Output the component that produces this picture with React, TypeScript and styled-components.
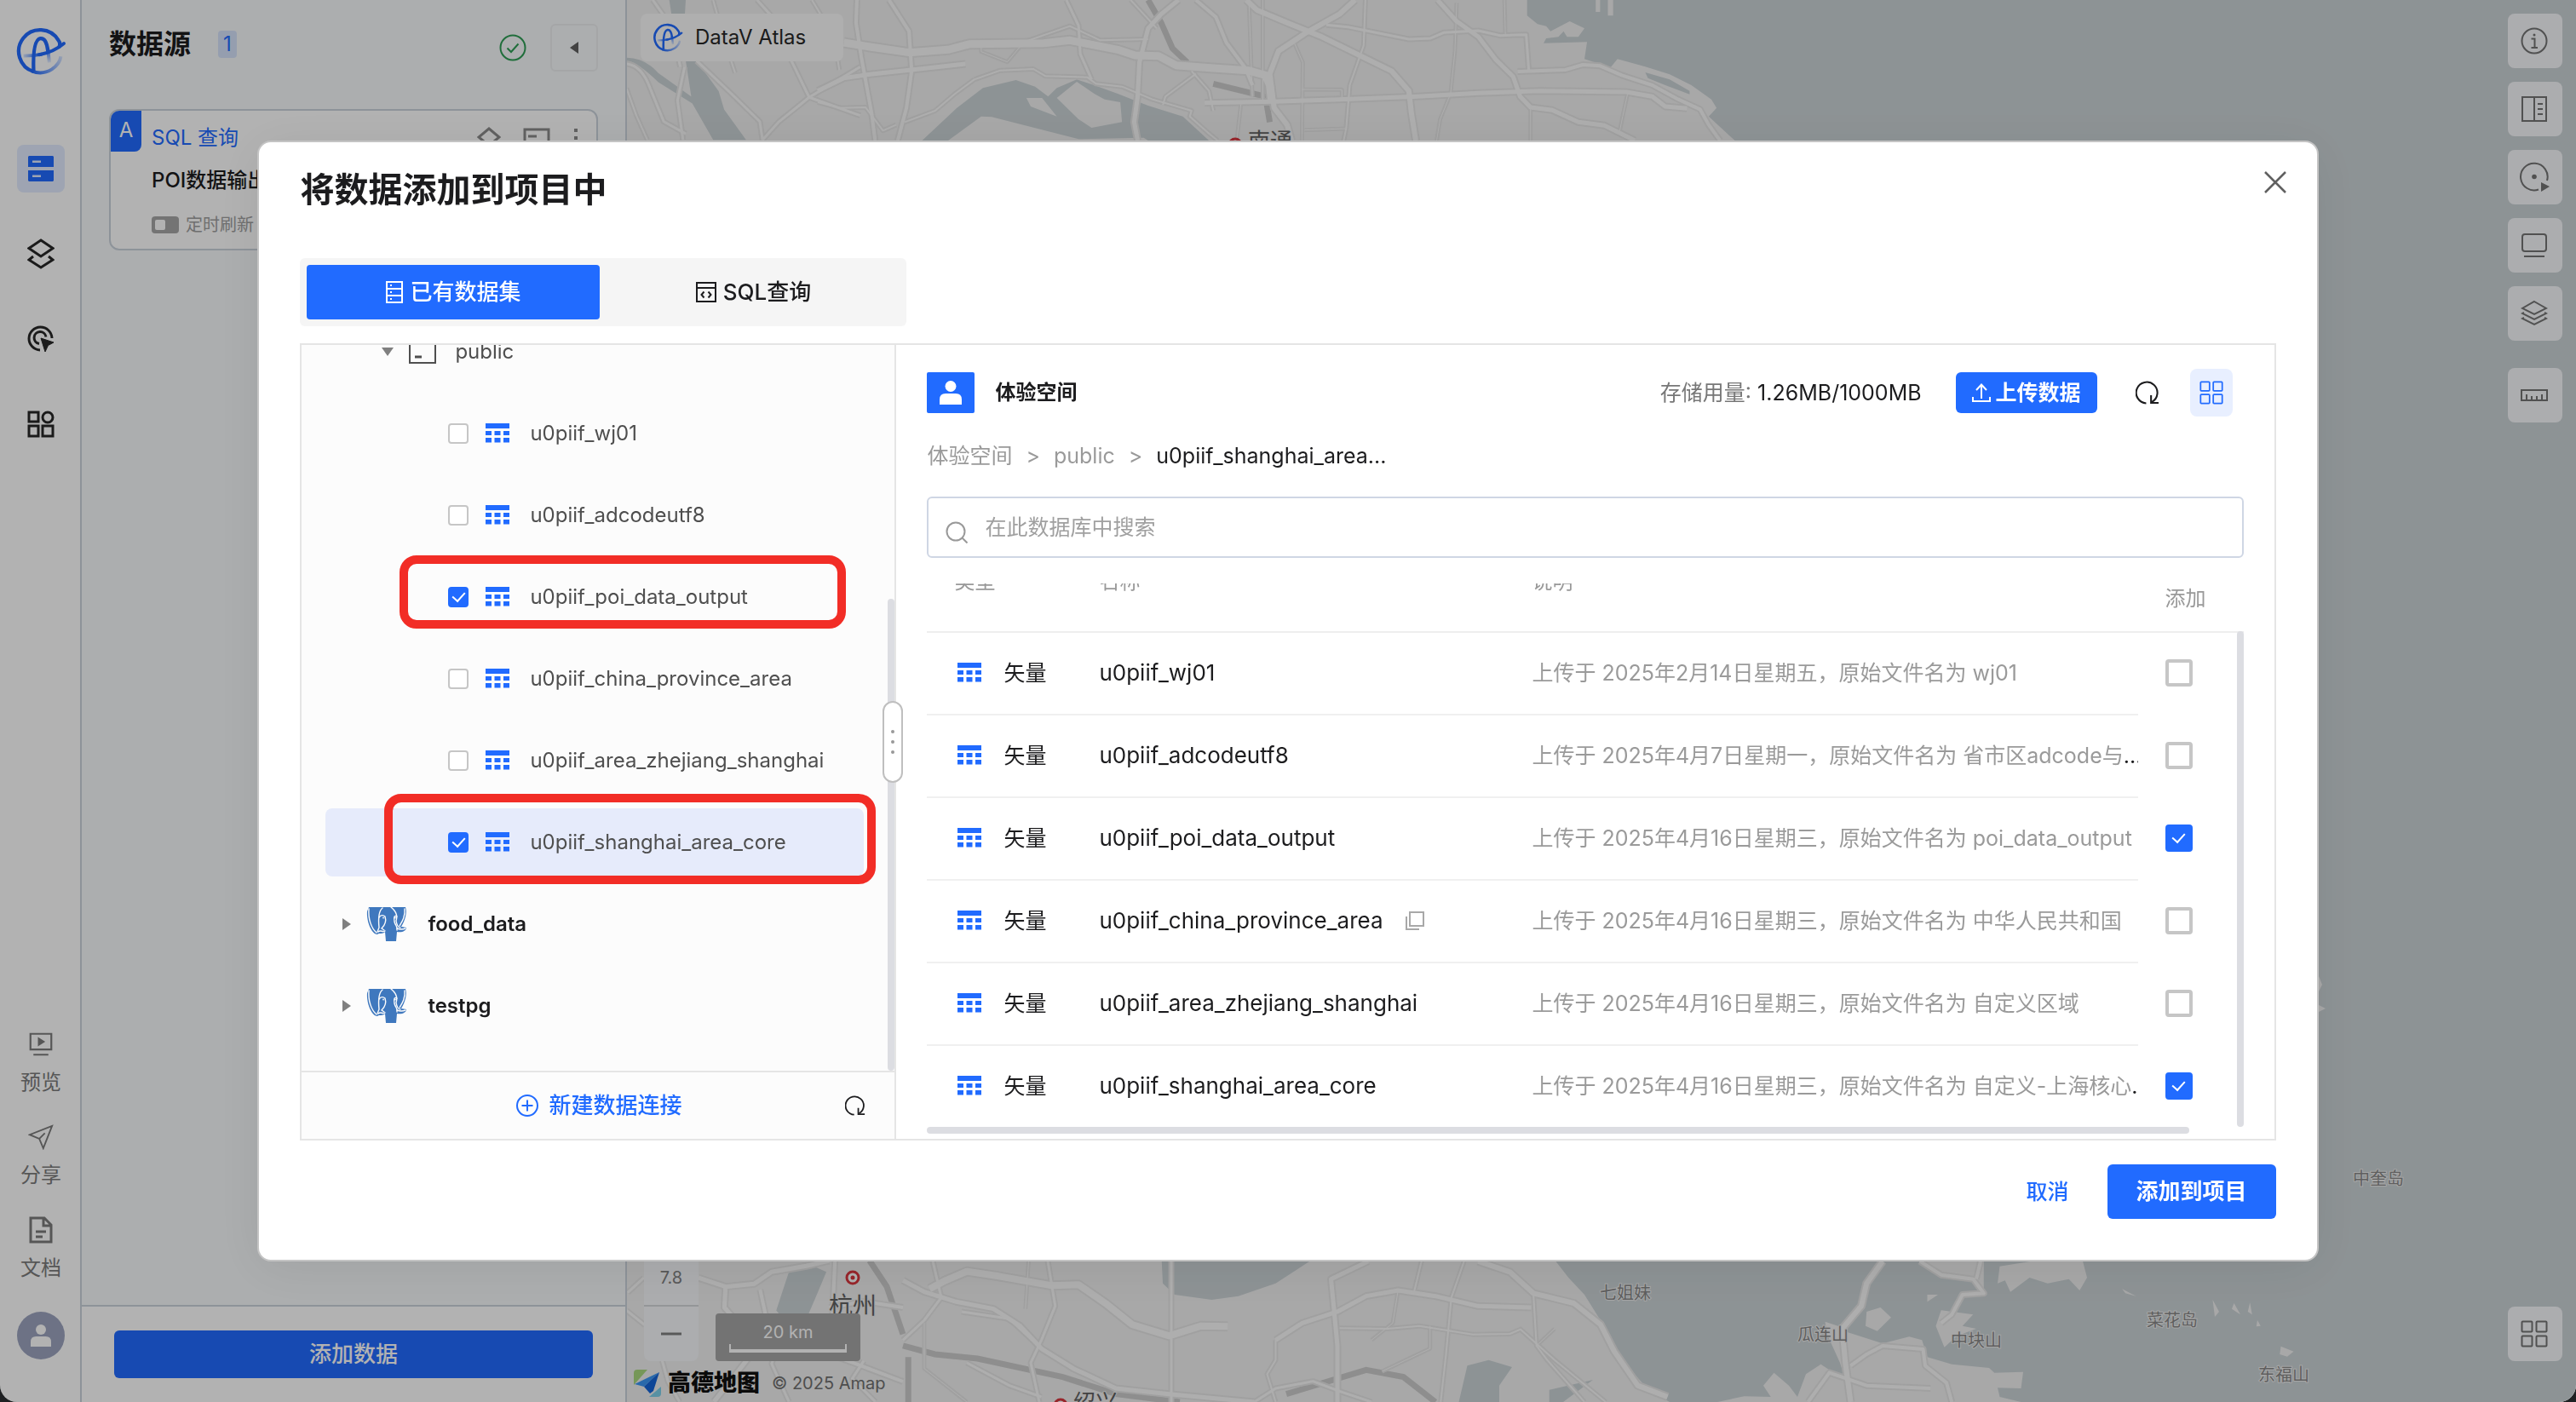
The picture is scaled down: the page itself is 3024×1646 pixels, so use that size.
import React from "react";
import styled, { createGlobalStyle, css } from "styled-components";

const BLUE = "#216bff";
const INK = "#1c1c1e";
const LINE = "#e5e5e5";

const GlobalStyle = createGlobalStyle`
  * { box-sizing: border-box; }
  body {
    margin: 0;
    background: #1e2022;
    color: ${INK};
    font-family: Inter, "Noto Sans CJK SC", sans-serif;
    font-size: 24px;
    line-height: 36px;
  }
  button { font: inherit; color: inherit; border: 0; background: none; padding: 0; cursor: pointer; }
  a { color: inherit; text-decoration: none; }
  h1, h2, p { margin: 0; }
  svg { display: block; flex: none; }
`;

/* ---------- icons ---------- */

type IconProps = { w?: number; h?: number; box?: string; sw?: number; children: React.ReactNode };
const Icon = ({ w = 32, h = w, box = "0 0 32 32", sw = 2, children }: IconProps) => (
  <svg width={w} height={h} viewBox={box} fill="none" stroke="currentColor" strokeWidth={sw} aria-hidden="true">
    {children}
  </svg>
);

const AtlasLogo = ({ size, id }: { size: number; id: string }) => (
  <svg width={size} height={size} viewBox="25 28 182 182" fill="none" aria-hidden="true">
    <defs>
      <linearGradient id={`${id}-ring`} gradientUnits="userSpaceOnUse" x1="80" y1="190" x2="190" y2="130">
        <stop offset="0" stopColor={BLUE} />
        <stop offset="1" stopColor={BLUE} stopOpacity="0.15" />
      </linearGradient>
      <linearGradient id={`${id}-leg`} gradientUnits="userSpaceOnUse" x1="0" y1="105" x2="0" y2="160">
        <stop offset="0" stopColor={BLUE} />
        <stop offset="1" stopColor={BLUE} stopOpacity="0.1" />
      </linearGradient>
      <linearGradient id={`${id}-bar`} gradientUnits="userSpaceOnUse" x1="50" y1="0" x2="110" y2="0">
        <stop offset="0" stopColor={BLUE} stopOpacity="0.1" />
        <stop offset="1" stopColor={BLUE} />
      </linearGradient>
    </defs>
    <path d="M90 192A76 76 0 1 1 178 80Q188 92 180 106" stroke={BLUE} strokeWidth="13" />
    <path d="M84 190Q120 205 155 184Q184 164 187 138" stroke={`url(#${id}-ring)`} strokeWidth="12" />
    <path d="M90 190C88 130 92 78 114 74C132 72 138 92 141 118" stroke={BLUE} strokeWidth="13" />
    <path d="M140 108Q143 128 146 160" stroke={`url(#${id}-leg)`} strokeWidth="12" />
    <path d="M54 136Q90 136 120 130" stroke={`url(#${id}-bar)`} strokeWidth="11" />
    <path d="M110 132Q160 124 198 92" stroke={BLUE} strokeWidth="12" strokeLinecap="round" />
  </svg>
);

const TableGlyph = () => (
  <svg width="28" height="24" viewBox="0 0 28 24" fill={BLUE} aria-hidden="true">
    <path d="M0 0H28V6H0zM0 9H7V14H0zM10.500 9H17.500V14H10.500zM21 9H28V14H21zM0 17H7V22.500H0zM10.500 17H17.500V22.500H10.500zM21 17H28V22.500H21z" />
  </svg>
);

const Elephant = () => (
  <svg width="48" height="40" viewBox="0 0 48 40" aria-hidden="true">
    <path
      d="M3 0H46C48 6 46 15 41 23L47 24C47 28 42 30 36 29L35 40H23L22 29C19 32 15 30 13 32C6 32 0 16 1 5Z"
      fill="#3f78be"
    />
    <g fill="none" stroke="#fcfcfc" strokeWidth="1.400" strokeLinecap="round">
      <path d="M19 1C14 5 14 14 15 24L13 29" />
      <path d="M15 12C17 9 20 9 22 11C24 17 21 22 18 25L21 27" />
      <path d="M14 29C17 26 19 30 22 28" />
      <path d="M29 0C34 4 37 10 35 16C36 22 38 24 40 24" />
      <path d="M36 11C33 9 32 12 33 17C34 22 37 22 36 27" />
      <path d="M36 25Q41 27 46 25" />
      <path d="M3 2C2 14 6 25 12 30" />
      <path d="M45 2C46 11 42 17 39 22" />
    </g>
    <circle cx="20" cy="12.500" r="0.900" fill="#fcfcfc" />
    <circle cx="34" cy="12.500" r="0.900" fill="#fcfcfc" />
  </svg>
);

const RefreshGlyph = ({ size }: { size: number }) => (
  <Icon w={size} box="0 0 27 27" sw={2}>
    <path d="M12 25.500A12 12 0 1 1 18.500 24" />
    <path d="M17.500 16.500V25H26" />
  </Icon>
);

const FourSquares = ({ size, sw = 2 }: { size: number; sw?: number }) => (
  <Icon w={size} sw={sw}>
    <rect x="1.500" y="1.500" width="12" height="12" rx="1" />
    <rect x="18.500" y="1.500" width="12" height="12" rx="1" />
    <rect x="1.500" y="18.500" width="12" height="12" rx="1" />
    <rect x="18.500" y="18.500" width="12" height="12" rx="1" />
  </Icon>
);

const PersonGlyph = ({ w, h }: { w: number; h: number }) => (
  <svg width={w} height={h} viewBox="0 0 26 28" fill="currentColor" aria-hidden="true">
    <circle cx="13" cy="6.500" r="6.500" />
    <path d="M0 28V22Q0 15 7 15H19Q26 15 26 22V28Z" />
  </svg>
);

/* ---------- page shell ---------- */

const Page = styled.div`
  display: flex;
  height: 100vh;
  overflow: hidden;
  border-radius: 0 0 20px 20px;
  background: #ffffff;
`;

const Rail = styled.nav`
  display: flex;
  flex-direction: column;
  align-items: center;
  width: 96px;
  flex: none;
  padding: 30px 0 50px 2px;
  border-right: 2px solid #cbd3dc;
`;

const RailGroup = styled.div`
  display: flex;
  flex-direction: column;
  gap: 44px;
  margin-top: 80px;
`;

const RailButton = styled.button<{ $active?: boolean }>`
  display: grid;
  place-items: center;
  width: 56px;
  height: 56px;
  border-radius: 8px;
  color: ${(p) => (p.$active ? BLUE : "#282828")};
  background: ${(p) => (p.$active ? "#e2ebff" : "transparent")};
`;

const RailFoot = styled.div`
  display: flex;
  flex-direction: column;
  align-items: center;
  margin-top: auto;
  color: #7c7c7c;
`;

const RailLink = styled.a`
  display: flex;
  flex-direction: column;
  align-items: center;
  gap: 10px;
  height: 109px;
`;

const IconSlot = styled.span`
  display: grid;
  place-items: center;
  height: 34px;
`;

const Avatar = styled.button`
  display: grid;
  place-items: center;
  width: 56px;
  height: 56px;
  margin-top: 4px;
  border-radius: 50%;
  color: #fff;
  background: #9ca4bf;
`;

const Sources = styled.aside`
  display: flex;
  flex-direction: column;
  width: 640px;
  flex: none;
  background: #f6f9fb;
  border-right: 2px solid #cbd3dc;
`;

const SourcesHead = styled.header`
  display: flex;
  align-items: flex-start;
  padding: 28px 32px 0;
`;

const SourcesLabel = styled.div`
  display: flex;
  align-items: center;
  gap: 32px;
`;

const SourcesTitle = styled.h2`
  font-size: 32px;
  line-height: 48px;
  font-weight: 700;
`;

const CountBadge = styled.span`
  padding: 0 6px;
  border-radius: 4px;
  line-height: 32px;
  color: ${BLUE};
  background: #d6e3fb;
`;

const Synced = styled.span`
  align-self: center;
  margin-left: auto;
  margin-right: 28px;
  color: #2f9e55;
`;

const CollapseButton = styled.button`
  display: grid;
  place-items: center;
  width: 56px;
  height: 56px;
  border: 2px solid #eceef0;
  border-radius: 6px;
  color: #606060;
`;

const SourceCard = styled.article`
  display: flex;
  margin: 44px 32px 0;
  border: 2px solid #cbd3dc;
  border-radius: 12px;
  overflow: hidden;
  background: #ffffff;
`;

const CardTag = styled.span`
  width: 36px;
  height: 48px;
  flex: none;
  text-align: center;
  line-height: 46px;
  border-bottom-right-radius: 8px;
  color: #fff;
  background: ${BLUE};
`;

const CardBody = styled.div`
  flex: 1;
  display: flex;
  flex-direction: column;
  gap: 14px;
  padding: 14px 20px 8px 12px;
`;

const CardTop = styled.div`
  display: flex;
  align-items: center;
  gap: 26px;
  color: #8c8c8c;
`;

const CardKind = styled.span`
  margin-right: auto;
  color: ${BLUE};
`;

const CardName = styled.p`
  font-weight: 500;
  white-space: nowrap;
`;

const CardRefresh = styled.label`
  display: flex;
  align-items: center;
  gap: 8px;
  font-size: 20px;
  line-height: 40px;
  color: #a0a0a0;
`;

const Toggle = styled.input`
  appearance: none;
  width: 32px;
  height: 20px;
  margin: 0;
  padding: 4px;
  border-radius: 4px;
  background: #a6a6a6;
  &::after {
    content: "";
    display: block;
    width: 12px;
    height: 12px;
    border-radius: 2px;
    background: #fff;
  }
`;

const SourcesFoot = styled.footer`
  margin-top: auto;
  padding: 28px 38px;
  border-top: 2px solid #cbd3dc;
  background: #ffffff;
`;

const AddDataButton = styled.button`
  width: 100%;
  height: 56px;
  border-radius: 6px;
  font-size: 26px;
  font-weight: 500;
  color: #fff;
  background: ${BLUE};
`;

/* ---------- map ---------- */

const MapArea = styled.main`
  position: relative;
  flex: 1;
  min-width: 0;
  overflow: hidden;
  background: #cbd3d6;
`;

const MapCanvas = styled.svg`
  position: absolute;
  inset: 0;
  width: 100%;
  height: 100%;
`;

const Brand = styled.div`
  position: absolute;
  left: 16px;
  top: 16px;
  display: flex;
  align-items: center;
  gap: 14px;
  height: 56px;
  padding: 0 44px 0 14px;
  border-radius: 8px;
  background: #fbfbfb;
  color: #282828;
`;

const ToolStack = styled.div<{ $bottom?: boolean }>`
  position: absolute;
  right: 16px;
  ${(p) => (p.$bottom ? "bottom: 48px;" : "top: 16px;")}
  display: flex;
  flex-direction: column;
  gap: 16px;
`;

const ToolButton = styled.button<{ $apart?: boolean }>`
  display: grid;
  place-items: center;
  width: 64px;
  height: 64px;
  margin-top: ${(p) => (p.$apart ? "16px" : "0")};
  padding-right: 2px;
  border-radius: 8px;
  color: #747474;
  background: #f6f8fb;
`;

const ZoomControl = styled.div`
  position: absolute;
  left: 20px;
  bottom: 48px;
  width: 64px;
  text-align: center;
  border-radius: 8px;
  color: #808080;
  font-size: 20px;
  background: #f6f8fb;
`;

const ZoomLevel = styled.div`
  line-height: 64px;
  border-bottom: 2px solid #d4d7da;
`;

const ZoomOut = styled.button`
  display: grid;
  place-items: center;
  width: 64px;
  height: 64px;
`;

const ScaleBar = styled.div`
  position: absolute;
  left: 104px;
  bottom: 48px;
  width: 170px;
  height: 56px;
  padding: 8px 16px 12px;
  border-radius: 4px;
  font-size: 20px;
  line-height: 28px;
  text-align: center;
  color: #fff;
  background: #a5a5a5;
`;

const ScaleRule = styled.div`
  height: 10px;
  border: solid #fff;
  border-width: 0 2px 4px;
`;

const Credit = styled.div`
  position: absolute;
  left: 8px;
  bottom: 2px;
  display: flex;
  align-items: center;
  gap: 8px;
  font-size: 20px;
  color: #707070;
`;

const CreditName = styled.strong`
  margin-right: 6px;
  font-size: 27px;
  line-height: 40px;
  font-weight: 900;
  color: #111;
`;

/* Each sheet holds its own local scale, so strokes are kept unscaled. */
const NORTH = "translate(960 0) scale(1.0204 0.3333)";
const SOUTH = "translate(1060 1440) scale(1.25 0.3333)";
const WEST = "scale(0.644 0.357)";
const CORNER = "translate(0 1100) scale(0.676 0.348)";

type Road = { t: string; w: number; d: string };
const ROADS: Road[] = [
  { t: NORTH, w: 11, d: "M30 150L60 165L105 185L150 175L175 155L260 152L290 142L320 160L345 175L365 195L392 197L412 230L455 240L495 248L515 265L520 300L522 355" },
  { t: NORTH, w: 7, d: "M0 320L30 275L60 262L110 245L170 225" },
  { t: NORTH, w: 6, d: "M45 0L44 80L50 200L56 300L62 400L66 495" },
  { t: NORTH, w: 6, d: "M82 0L105 110L108 250L102 380L92 495" },
  { t: NORTH, w: 5, d: "M286 0L300 90L302 190L315 280" },
  { t: NORTH, w: 7, d: "M415 0L395 50L380 100L370 220L368 340L364 430L368 495" },
  { t: NORTH, w: 6, d: "M435 0L458 60L470 150L492 240L500 300" },
  { t: NORTH, w: 8, d: "M493 0L505 35L540 80L580 130L620 190L660 250L680 320L683 400L688 495" },
  { t: NORTH, w: 8, d: "M618 0L600 50L562 115L530 180L520 260L525 380L540 440L545 495" },
  { t: NORTH, w: 4, d: "M630 0L628 160L612 300L608 450L605 495" },
  { t: NORTH, w: 7, d: "M445 362L525 358L600 350L690 340L760 328L830 320L930 324L960 340L975 375L1000 382" },
  { t: NORTH, w: 5, d: "M585 88L610 95L680 138L705 135L720 115L760 108L785 125L815 122L818 250" },
  { t: NORTH, w: 7, d: "M713 0L735 75L760 130L780 210L800 270L808 340L820 378L845 388L875 430L905 442L940 495" },
  { t: NORTH, w: 6, d: "M805 252L860 246L880 228L900 232L925 265L960 300L990 350L1015 385L1025 440L1038 495" },
  { t: NORTH, w: 3, d: "M735 10L733 180L728 330L716 420L712 495" },
  { t: NORTH, w: 3, d: "M548 150L558 220L557 495M557 315L603 316L603 345M560 458L607 453" },
  { t: NORTH, w: 3, d: "M790 0L791 120M820 380V495M932 325L926 410L922 470" },
  { t: NORTH, w: 4, d: "M180 280L158 330L135 390L100 430M180 280L210 248L248 243L262 268L310 272L320 295L350 305L385 350L430 390L428 410L450 470L460 495" },
  { t: NORTH, w: 4, d: "M0 360L25 380L55 378L75 460L90 440M240 145L290 92L325 142L380 138" },
  { t: NORTH, w: 3, d: "M188 150V182L218 218L234 160M487 362L482 495M512 0V355M496 0L500 340" },
  { t: NORTH, w: 4, d: "M435 260L400 340L397 370M430 250L450 320L455 390M360 0L390 100" },
  { t: WEST, w: 5, d: "M1142 210Q1170 215 1185 290L1210 400L1250 440M1190 0L1225 90L1240 220M1380 0L1420 80L1440 190L1475 320L1568 380" },
  { t: WEST, w: 5, d: "M1475 320L1420 400L1390 460M1475 320L1568 220M1270 200L1340 320L1385 400L1390 460M1248 220L1235 330L1245 460" },
  { t: WEST, w: 4, d: "M1300 0L1320 130L1340 240M1480 0L1520 120L1530 230M1142 290L1160 380L1180 460" },
  { t: SOUTH, w: 10, d: "M25 220L40 190L60 158L90 175L140 208L165 205L190 270L215 345L250 385L280 350L305 352" },
  { t: SOUTH, w: 7, d: "M0 190L20 230L50 265L85 290L110 350L130 430L160 500L200 570L250 590L330 618" },
  { t: SOUTH, w: 5, d: "M136 122L143 280L130 400L120 480L128 618M252 122V618M28 122L36 250L20 330L0 400" },
  { t: SOUTH, w: 7, d: "M437 122L402 185L405 300L408 420V618" },
  { t: SOUTH, w: 7, d: "M350 400L375 340L408 300L435 245L465 225L500 245L540 280L590 285" },
  { t: SOUTH, w: 8, d: "M540 122L570 160L592 235L630 270L655 345L668 440L690 560L718 600" },
  { t: SOUTH, w: 4, d: "M410 358L455 360L485 350L535 380L570 378L580 362L612 470L660 618" },
  { t: SOUTH, w: 4, d: "M350 400V470L342 520L350 618M527 122L515 250L510 450L505 618M487 122L480 230M592 235L595 420L605 470L640 618" },
  { t: SOUTH, w: 5, d: "M330 618L350 570L385 545L410 580L440 618M55 300L100 325L130 430M60 480L100 560L130 600" },
  { t: SOUTH, w: 3, d: "M465 225L460 340L440 400M495 350V430L450 510M118 122L115 290M20 340V500L60 618M612 360L595 420" },
  { t: SOUTH, w: 8, d: "M920 122L905 200L900 280L882 360L885 480L890 618" },
  { t: SOUTH, w: 6, d: "M955 122L975 170L1005 185L1015 235L995 240L985 310L975 340M1012 122L1008 185" },
  { t: SOUTH, w: 6, d: "M890 490L905 450L920 420L958 432L960 490L980 550L985 618M850 618L870 515L905 560L965 570" },
  { t: CORNER, w: 7, d: "M1213 1150L1260 1180L1310 1170L1340 1130L1400 1110L1440 1092M1260 1180L1258 1250L1285 1310L1300 1420L1240 1568" },
  { t: CORNER, w: 6, d: "M1320 1190L1330 1280L1360 1330L1430 1400L1500 1450L1568 1500M1440 1250L1500 1230L1568 1250M1450 1092L1445 1300" },
  { t: CORNER, w: 5, d: "M1090 1200L1118 1150M1088 1260L1120 1310M1150 1430L1160 1500L1180 1568M1500 1430L1480 1490L1520 1568M1360 1330L1340 1440L1370 1568" },
];

const PLACES: [string, number, number, number, string][] = [
  ["南通", 1491, 175, 26, "#606060"],
  ["杭州", 1001, 1543, 28, "#606060"],
  ["绍兴", 1286, 1656, 26, "#606060"],
  ["七姐妹", 1908, 1525, 20, "#888888"],
  ["瓜连山", 2140, 1574, 20, "#888888"],
  ["中块山", 2320, 1581, 20, "#888888"],
  ["菜花岛", 2550, 1557, 20, "#888888"],
  ["东福山", 2681, 1621, 20, "#888888"],
  ["中奎岛", 2792, 1391, 20, "#888888"],
];

const CityMap = () => (
  <MapCanvas viewBox="736 0 2288 1646" preserveAspectRatio="xMinYMin slice" role="img" aria-label="地图">
    <g fill="#f1f1f1">
      <path transform={NORTH} d="M-230 0H816V55L828 85L838 92L843 110L865 75L882 100L875 130L862 130L858 110L852 130L838 135L835 152L885 148L882 208L912 238L920 208L952 235L980 262L1005 300L1028 350L1034 380L1025 410L1055 495V700H-230ZM895 0H900V42H895ZM909 0H915V55H909Z" />
      <path transform={SOUTH} d="M-270 60H600L613 122L625 180L640 240L660 360L680 490L700 575L720 618V640H-270Z" />
      <path transform={SOUTH} d="M885 370L920 412L945 388L957 400L962 460L985 485L1020 498L1025 515L1052 512L1050 570L1028 568L1030 600L1050 618H765L790 598L815 600L808 560L818 515L832 560L840 600L848 520L862 485L872 510L885 540L880 480L868 380L866 335L878 350Z" />
      <path transform={SOUTH} d="M955 122H1015V235L1005 185L975 180ZM1030 140L1060 122H1108L1112 180L1105 225L1095 185L1075 200L1058 180L1040 230L1035 190L1028 200ZM905 300L918 285L928 320L915 368L904 350ZM975 295L1005 310L995 350L1008 360L990 385L978 425L970 350ZM962 240L972 240L962 265ZM1145 220L1158 245L1148 235ZM1230 258L1236 300L1232 318ZM1250 270L1256 310L1248 290ZM1265 268L1267 310L1263 300ZM1294 422L1306 440L1300 458L1293 450ZM1272 330L1275 350L1271 352Z" />
      <path d="M2722 1146l4 10l-4 8zM2722 1180l8 4l-8 4z" />
    </g>
    <g fill="#cbd3d6">
      <path transform={NORTH} d="M120 495L160 380L190 310L228 282L250 305L265 340L275 310L298 280L318 300L345 330L380 372L420 410L450 495ZM952 255L980 280L1003 320V332L975 300L955 275Z" />
      <path transform={SOUTH} d="M243 122H382L350 200L315 245L290 258L255 240L244 200ZM530 490L550 470L572 495L560 560V618H522ZM607 575L648 540L620 618H607Z" />
      <path transform={WEST} d="M1220 0H1250L1248 60H1225ZM1250 200H1270L1300 310L1360 460H1300L1262 340ZM1142 190Q1175 190 1200 240L1262 320V340L1200 270Q1160 200 1142 200ZM1270 200L1310 300L1320 360L1312 360L1280 260Z" />
      <path transform={CORNER} d="M1370 1130L1400 1100L1435 1130L1420 1200L1400 1290L1370 1310L1348 1260Z" />
    </g>
    <g fill="#f1f1f1">
      <path transform={NORTH} d="M150 495L188 410L200 412L300 490L375 485L380 495ZM240 345L258 345L275 410L245 375ZM275 345L298 288L318 330L330 350L348 360L350 430L315 450L300 420Z" />
    </g>
    <g fill="none" stroke="#cccccc" strokeWidth="7">
      <path transform={NORTH} vectorEffect="non-scaling-stroke" d="M380 0L395 80L408 170L425 220M455 295L515 340L520 430" />
      <path transform={SOUTH} vectorEffect="non-scaling-stroke" d="M0 420L30 450L70 465L150 530L200 590L260 618M360 590L435 505L470 530L500 618M5 460V618" />
      <path transform={CORNER} vectorEffect="non-scaling-stroke" d="M1510 1092L1540 1180L1568 1340" />
    </g>
    <g fill="none" stroke="#e6e6e6">
      {ROADS.map((r) => (
        <path key={r.d} transform={r.t} d={r.d} strokeWidth={r.w + 2} vectorEffect="non-scaling-stroke" strokeLinejoin="round" />
      ))}
    </g>
    <g fill="none" stroke="#fafafa">
      {ROADS.map((r) => (
        <path key={r.d} transform={r.t} d={r.d} strokeWidth={r.w - 2} vectorEffect="non-scaling-stroke" strokeLinejoin="round" />
      ))}
    </g>
    {[[1450, 170], [1001, 1500], [1245, 1650]].map(([x, y]) => (
      <g key={x}>
        <circle cx={x} cy={y} r="7" fill="#fff" stroke="#d9363e" strokeWidth="3" />
        <circle cx={x} cy={y} r="2.500" fill="#d9363e" />
      </g>
    ))}
    <g textAnchor="middle" paintOrder="stroke" stroke="#eeeeee" strokeWidth="2">
      {PLACES.map(([name, x, y, size, color]) => (
        <text key={name} x={x} y={y} fontSize={size} fill={color}>{name}</text>
      ))}
    </g>
  </MapCanvas>
);

/* ---------- dialog ---------- */

const Overlay = styled.div`
  position: fixed;
  inset: 0;
  display: grid;
  place-items: center;
  border-radius: 0 0 20px 20px;
  background: rgba(0, 0, 0, 0.3);
`;

const Dialog = styled.section`
  display: flex;
  flex-direction: column;
  width: 80%;
  height: 80%;
  padding: 32px 48px 48px;
  border: 2px solid #c4c4c4;
  border-radius: 16px;
  background: #ffffff;
  box-shadow: 0 8px 60px rgba(0, 0, 0, 0.08);
`;

const DialogHead = styled.header`
  display: flex;
  justify-content: space-between;
  align-items: flex-start;
  margin-right: -12px;
`;

const DialogTitle = styled.h1`
  font-size: 40px;
  line-height: 48px;
  font-weight: 700;
`;

const CloseButton = styled.button`
  padding-top: 2px;
  color: #606060;
`;

const Tabs = styled.div`
  display: grid;
  grid-template-columns: 344px 344px;
  gap: 8px;
  width: max-content;
  margin: 56px 0 20px;
  padding: 8px;
  border-radius: 6px;
  background: #f5f5f5;
`;

const Tab = styled.button<{ $active?: boolean }>`
  display: flex;
  align-items: center;
  justify-content: center;
  gap: 8px;
  height: 64px;
  border-radius: 4px;
  font-size: 26px;
  font-weight: 500;
  color: ${(p) => (p.$active ? "#fff" : INK)};
  background: ${(p) => (p.$active ? BLUE : "transparent")};
`;

const Workspace = styled.div`
  position: relative;
  display: flex;
  flex: 1;
  min-height: 0;
  border: 2px solid ${LINE};
`;

const TreePane = styled.div`
  display: flex;
  flex-direction: column;
  width: 698px;
  flex: none;
  border-right: 2px solid ${LINE};
  background: #fcfcfc;
`;

const TreeScroll = styled.div`
  position: relative;
  display: flex;
  flex: 1;
  min-height: 0;
  flex-direction: column;
  justify-content: flex-end;
  gap: 16px;
  overflow: hidden;
  padding: 0 36px 36px 28px;
`;

const indent = { group: 66, leaf: 144, source: 20 };

const TreeRow = styled.div<{ $kind: keyof typeof indent; $selected?: boolean }>`
  position: relative;
  display: flex;
  align-items: center;
  flex: none;
  height: 80px;
  padding-left: ${(p) => indent[p.$kind]}px;
  border-radius: 8px;
  color: ${(p) => (p.$kind === "source" ? INK : "#4f4f4f")};
  font-weight: ${(p) => (p.$kind === "source" ? 600 : 400)};
  background: ${(p) => (p.$selected ? "#e6ebfb" : "transparent")};
`;

const Twisty = styled.span<{ $open?: boolean }>`
  width: 0;
  height: 0;
  margin-right: 18px;
  border-style: solid;
  border-color: transparent;
  ${(p) =>
    p.$open
      ? css`border-width: 10px 7px 0; border-top-color: #808080;`
      : css`border-width: 7px 0 7px 10px; border-left-color: #808080;`}
`;

const RowText = styled.span<{ $gap: number }>`
  margin-left: ${(p) => p.$gap}px;
  white-space: nowrap;
`;

const LeafLabel = styled.label`
  display: flex;
  align-items: center;
  gap: 20px;
`;

const Check = styled.input<{ $large?: boolean }>`
  appearance: none;
  display: grid;
  place-items: center;
  flex: none;
  width: ${(p) => (p.$large ? 32 : 24)}px;
  height: ${(p) => (p.$large ? 32 : 24)}px;
  margin: 0;
  border: ${(p) => (p.$large ? 4 : 2)}px solid #c6c6c6;
  border-radius: 4px;
  background: #fff;
  &:checked {
    border-color: ${BLUE};
    background: ${BLUE};
  }
  &:checked::after {
    content: "";
    width: 7px;
    height: 12px;
    margin-bottom: 4px;
    border: solid #fff;
    border-width: 0 2px 2px 0;
    transform: rotate(42deg);
  }
`;

const Marker = styled.span<{ $wide?: boolean }>`
  position: absolute;
  border: 10px solid #f22d26;
  border-radius: 20px;
  pointer-events: none;
  ${(p) =>
    p.$wide
      ? css`left: 69px; right: -14px; top: -17px; bottom: -9px;`
      : css`left: 87px; right: 21px; top: -9px; bottom: 3px;`}
`;

const ScrollThumb = styled.span<{ $axis: "tree" | "rows" }>`
  position: absolute;
  width: 8px;
  border-radius: 4px;
  background: #dcdde2;
  right: 0;
  bottom: 0;
  top: ${(p) => (p.$axis === "tree" ? "35%" : "56px")};
`;

const TreeFoot = styled.footer`
  display: flex;
  align-items: center;
  height: 80px;
  padding: 0 34px 0 252px;
  border-top: 2px solid ${LINE};
`;

const NewConnection = styled.button`
  display: flex;
  align-items: center;
  gap: 12px;
  margin-right: auto;
  font-size: 26px;
  font-weight: 500;
  color: ${BLUE};
`;

const Splitter = styled.button`
  position: absolute;
  left: 682px;
  top: 418px;
  display: flex;
  flex-direction: column;
  align-items: center;
  justify-content: center;
  gap: 8px;
  width: 24px;
  height: 96px;
  border: 2px solid #bfbfbf;
  border-radius: 12px;
  background: #fff;
  &::before,
  &::after,
  & > i {
    content: "";
    width: 4px;
    height: 4px;
    border-radius: 50%;
    background: #999;
  }
`;

const DataPane = styled.div`
  display: flex;
  flex-direction: column;
  flex: 1;
  min-width: 0;
  padding: 28px 36px 6px;
`;

const PaneHead = styled.div`
  display: flex;
  align-items: center;
  height: 56px;
  padding-right: 13px;
`;

const SpaceBadge = styled.span`
  display: grid;
  place-items: center;
  width: 56px;
  height: 48px;
  margin-right: 24px;
  border-radius: 2px;
  color: #fff;
  background: ${BLUE};
`;

const SpaceName = styled.h2`
  margin-right: auto;
  font-size: 24px;
  font-weight: 600;
`;

const Quota = styled.p`
  font-size: 25px;
  color: #777777;
`;

const QuotaValue = styled.span`
  color: ${INK};
`;

const UploadButton = styled.button`
  display: flex;
  align-items: center;
  justify-content: center;
  gap: 6px;
  width: 166px;
  height: 48px;
  margin: 0 45px 0 40px;
  border-radius: 6px;
  font-size: 25px;
  font-weight: 600;
  color: #fff;
  background: ${BLUE};
`;

const GridToggle = styled.button`
  display: grid;
  place-items: center;
  width: 50px;
  height: 56px;
  margin-left: 36px;
  border-radius: 8px;
  color: ${BLUE};
  background: #e8efff;
`;

const Crumbs = styled.nav`
  display: flex;
  gap: 16px;
  margin: 28px 0 30px;
  font-size: 25px;
  color: #9a9a9a;
`;

const CrumbHere = styled.span`
  color: ${INK};
`;

const SearchBox = styled.div`
  display: flex;
  align-items: center;
  gap: 20px;
  height: 72px;
  flex: none;
  padding: 0 20px;
  border: 2px solid #cfd6e4;
  border-radius: 6px;
  color: #999;
`;

const SearchIcon = styled.label`
  padding-top: 12px;
`;

const SearchInput = styled.input`
  flex: 1;
  border: 0;
  padding: 0;
  outline: none;
  font: inherit;
  font-size: 25px;
  background: transparent;
  &::placeholder {
    color: #a0a0a0;
  }
`;

const TableArea = styled.div`
  position: relative;
  flex: 1;
  min-height: 0;
  margin-top: 30px;
  overflow: hidden;
`;

const DataTable = styled.table`
  width: 100%;
  table-layout: fixed;
  border-collapse: separate;
  border-spacing: 0;
  font-size: 25px;
`;

const HeadCell = styled.th`
  padding: 0;
  border-bottom: 2px solid #eeeeee;
  font-size: 24px;
  font-weight: 400;
  text-align: left;
  color: #999;
`;

const HeadClip = styled.div<{ $pinned?: boolean }>`
  display: flex;
  align-items: flex-end;
  height: 56px;
  overflow: hidden;
  padding-left: 32px;
  padding-bottom: ${(p) => (p.$pinned ? 20 : 40)}px;
`;

const Cell = styled.td`
  height: 97px;
  padding: 0 0 0 32px;
  border-bottom: 2px solid #f0f0f0;
  white-space: nowrap;
  overflow: hidden;
`;

const TypeCell = styled(Cell)`
  padding-left: 36px;
`;

const NameCell = styled(Cell)`
  font-size: 26px;
`;

const PinnedCell = styled(Cell)`
  border-bottom-color: transparent;
`;

const CellLine = styled.div`
  display: flex;
  align-items: center;
  gap: 26px;
`;

const CopyButton = styled.button`
  color: #a8a8a8;
`;

const Note = styled.span`
  color: #9a9a9a;
`;

const SideTrack = styled.span`
  height: 8px;
  flex: none;
  margin: 0 64px 0 0;
  border-radius: 4px;
  background: #dcdde2;
`;

const DialogFoot = styled.footer`
  display: flex;
  justify-content: flex-end;
  align-items: center;
  gap: 45px;
  margin-top: 28px;
  font-size: 25px;
  font-weight: 500;
`;

const CancelButton = styled.button`
  color: ${BLUE};
`;

const ConfirmButton = styled.button`
  height: 64px;
  padding: 0 34px;
  border-radius: 6px;
  font-size: 26px;
  font-weight: 600;
  color: #fff;
  background: ${BLUE};
`;

type Dataset = { name: string; note: string; cut?: boolean; checked?: boolean; copy?: boolean; mark?: "narrow" | "wide" };
const DATASETS: Dataset[] = [
  { name: "u0piif_wj01", note: "上传于 2025年2月14日星期五，原始文件名为 wj01" },
  { name: "u0piif_adcodeutf8", note: "上传于 2025年4月7日星期一，原始文件名为 省市区adcode与", cut: true },
  { name: "u0piif_poi_data_output", note: "上传于 2025年4月16日星期三，原始文件名为 poi_data_output", checked: true, mark: "narrow" },
  { name: "u0piif_china_province_area", note: "上传于 2025年4月16日星期三，原始文件名为 中华人民共和国", copy: true },
  { name: "u0piif_area_zhejiang_shanghai", note: "上传于 2025年4月16日星期三，原始文件名为 自定义区域" },
  { name: "u0piif_shanghai_area_core", note: "上传于 2025年4月16日星期三，原始文件名为 自定义-上海核心", cut: true, checked: true, mark: "wide" },
];

const Tree = () => (
  <TreePane>
    <TreeScroll>
      <TreeRow $kind="group">
        <Twisty $open />
        <Icon w={32} h={28} box="0 0 32 28">
          <path d="M1 1H15L18 5H31V27H1Z" />
          <path d="M7 20H15" strokeWidth="3" />
        </Icon>
        <RowText $gap={22}>public</RowText>
      </TreeRow>
      {DATASETS.map((d) => (
        <TreeRow key={d.name} $kind="leaf" $selected={d.mark === "wide"}>
          <LeafLabel>
            <Check type="checkbox" defaultChecked={d.checked} />
            <TableGlyph />
            <RowText $gap={4}>{d.name}</RowText>
          </LeafLabel>
          {d.mark && <Marker $wide={d.mark === "wide"} />}
        </TreeRow>
      ))}
      {["food_data", "testpg"].map((name) => (
        <TreeRow key={name} $kind="source">
          <Twisty />
          <Elephant />
          <RowText $gap={24}>{name}</RowText>
        </TreeRow>
      ))}
      <ScrollThumb $axis="tree" />
    </TreeScroll>
    <TreeFoot>
      <NewConnection>
        <Icon w={26} box="0 0 26 26">
          <circle cx="13" cy="13" r="12" />
          <path d="M13 6.500V19.500M6.500 13H19.500" />
        </Icon>
        新建数据连接
      </NewConnection>
      <button aria-label="刷新"><RefreshGlyph size={24} /></button>
    </TreeFoot>
  </TreePane>
);

const Datasets = () => (
  <DataPane>
    <PaneHead>
      <SpaceBadge><PersonGlyph w={26} h={28} /></SpaceBadge>
      <SpaceName>体验空间</SpaceName>
      <Quota>存储用量: <QuotaValue>1.26MB/1000MB</QuotaValue></Quota>
      <UploadButton>
        <Icon w={22} h={22} box="0 0 22 22">
          <path d="M11 18V2M5 8L11 1.500L17 8M1 16V21H21V16" />
        </Icon>
        上传数据
      </UploadButton>
      <button aria-label="刷新"><RefreshGlyph size={28} /></button>
      <GridToggle aria-label="网格视图"><FourSquares size={28} /></GridToggle>
    </PaneHead>
    <Crumbs>
      <a href="#space">体验空间</a>
      <span>&gt;</span>
      <a href="#public">public</a>
      <span>&gt;</span>
      <CrumbHere>u0piif_shanghai_area...</CrumbHere>
    </Crumbs>
    <SearchBox>
      <SearchIcon htmlFor="dataset-search" aria-label="搜索">
        <Icon w={26} box="0 0 26 26">
          <circle cx="12" cy="12" r="10.500" />
          <path d="M19.500 19.500L25.500 25.500" />
        </Icon>
      </SearchIcon>
      <SearchInput id="dataset-search" placeholder="在此数据库中搜索" />
    </SearchBox>
    <TableArea>
      <DataTable>
        <colgroup>
          <col style={{ width: 170 }} />
          <col style={{ width: 508 }} />
          <col />
          <col style={{ width: 124 }} />
        </colgroup>
        <thead>
          <tr>
            <HeadCell><HeadClip>类型</HeadClip></HeadCell>
            <HeadCell><HeadClip>名称</HeadClip></HeadCell>
            <HeadCell><HeadClip>说明</HeadClip></HeadCell>
            <HeadCell><HeadClip $pinned>添加</HeadClip></HeadCell>
          </tr>
        </thead>
        <tbody>
          {DATASETS.map((d) => (
            <tr key={d.name}>
              <TypeCell><CellLine><TableGlyph />矢量</CellLine></TypeCell>
              <NameCell>
                <CellLine>
                  {d.name}
                  {d.copy && (
                    <CopyButton aria-label="复制">
                      <Icon w={22} box="0 0 22 22">
                        <path d="M5 1H21V17H5ZM1 6V21H16" />
                      </Icon>
                    </CopyButton>
                  )}
                </CellLine>
              </NameCell>
              <Cell><Note>{d.note}</Note>{d.cut && "..."}</Cell>
              <PinnedCell><Check type="checkbox" $large defaultChecked={d.checked} aria-label={d.name} /></PinnedCell>
            </tr>
          ))}
        </tbody>
      </DataTable>
      <ScrollThumb $axis="rows" />
    </TableArea>
    <SideTrack />
  </DataPane>
);

export default function App() {
  return (
    <>
      <GlobalStyle />
      <Page>
        <Rail>
          <AtlasLogo size={60} id="rail" />
          <RailGroup>
            <RailButton $active aria-label="数据源">
              <svg width="30" height="30" viewBox="0 0 30 30" fill={BLUE} aria-hidden="true">
                <path d="M1 0H29L30 1V13H0V1ZM0 17H30V29L29 30H1L0 29Z" />
                <path d="M5 5.500H15V8H5ZM5 22.500H15V25H5Z" fill="#e2ebff" />
              </svg>
            </RailButton>
            <RailButton aria-label="图层">
              <Icon w={32} h={36} box="0 0 32 36" sw={3}>
                <path d="M16 2L30 11.500L16 21L2 11.500Z" />
                <path d="M7 21L2 25L16 34L30 25L25 21" />
              </Icon>
            </RailButton>
            <RailButton aria-label="交互">
              <Icon w={32} sw={3}>
                <path d="M15 29A13.500 13.500 0 1 1 29 15" />
                <path d="M14 21.500A7 7 0 1 1 22 13.500" />
                <path d="M16 15L31 20L24.500 23.500L21 31Z" fill="currentColor" strokeWidth="1" />
              </Icon>
            </RailButton>
            <RailButton aria-label="组件">
              <Icon w={32} sw={3}>
                <path d="M2 2H13V13H2ZM2 18H13V30H2ZM18 18H30V30H18Z" />
                <circle cx="24" cy="8" r="6" />
              </Icon>
            </RailButton>
          </RailGroup>
          <RailFoot>
            <RailLink href="#preview">
              <IconSlot>
                <Icon w={28}>
                  <path d="M2 2H30V23H2ZM6 30H26" strokeWidth="2.500" />
                  <path d="M13 8V17L20 12.500Z" fill="currentColor" />
                </Icon>
              </IconSlot>
              预览
            </RailLink>
            <RailLink href="#share">
              <IconSlot>
                <Icon w={30} sw={2}>
                  <path d="M30 2L19 30L14 18L2 13Z" />
                  <path d="M14 18L21 11" />
                </Icon>
              </IconSlot>
              分享
            </RailLink>
            <RailLink href="#docs">
              <IconSlot>
                <Icon w={28} h={32} box="0 0 28 32" sw={3}>
                  <path d="M2 2H18L26 10V30H2ZM17 2V11H26M8 18H20M8 24H16" />
                </Icon>
              </IconSlot>
              文档
            </RailLink>
            <Avatar aria-label="用户"><PersonGlyph w={24} h={26} /></Avatar>
          </RailFoot>
        </Rail>

        <Sources>
          <SourcesHead>
            <SourcesLabel>
              <SourcesTitle>数据源</SourcesTitle>
              <CountBadge>1</CountBadge>
            </SourcesLabel>
            <Synced>
              <Icon w={32}>
                <circle cx="16" cy="16" r="14.500" />
                <path d="M9.500 16.500L14 21L22.500 11.500" />
              </Icon>
            </Synced>
            <CollapseButton aria-label="收起">
              <svg width="10" height="14" viewBox="0 0 10 14" fill="currentColor" aria-hidden="true"><path d="M10 0V14L0 7Z" /></svg>
            </CollapseButton>
          </SourcesHead>
          <SourceCard>
            <CardTag>A</CardTag>
            <CardBody>
              <CardTop>
                <CardKind>SQL 查询</CardKind>
                <Icon w={28} h={28} box="0 0 28 28" sw={3}><path d="M14 3L26 13L14 23L2 13Z" /></Icon>
                <Icon w={32} h={24} box="0 0 32 24" sw={3}><path d="M2 2H30V17H2ZM6 10H16" /></Icon>
                <Icon w={8} h={28} box="0 0 8 28" sw={4}><path d="M4 3V7M4 12V16M4 21V25" /></Icon>
              </CardTop>
              <CardName>POI数据输出</CardName>
              <CardRefresh><Toggle type="checkbox" role="switch" />定时刷新</CardRefresh>
            </CardBody>
          </SourceCard>
          <SourcesFoot><AddDataButton>添加数据</AddDataButton></SourcesFoot>
        </Sources>

        <MapArea>
          <CityMap />
          <Brand><AtlasLogo size={36} id="brand" />DataV Atlas</Brand>
          <ToolStack>
            <ToolButton aria-label="信息">
              <Icon w={32}>
                <circle cx="16" cy="16" r="14.500" />
                <path d="M12.500 13.500H16.500V23.500M12.500 24H20" />
                <circle cx="16" cy="9" r="1.500" fill="currentColor" stroke="none" />
              </Icon>
            </ToolButton>
            <ToolButton aria-label="面板">
              <Icon w={32}>
                <path d="M2 2H30V30H2ZM16 2V30M20 10H26M20 16H26M20 22H26" />
              </Icon>
            </ToolButton>
            <ToolButton aria-label="播放">
              <Icon w={36} box="0 0 36 36">
                <path d="M23 32.500A15.800 15.800 0 1 1 33 22" />
                <circle cx="18" cy="17.500" r="2.800" fill="currentColor" stroke="none" />
                <path d="M26 24L36 29L26 35Z" fill="currentColor" stroke="none" />
              </Icon>
            </ToolButton>
            <ToolButton aria-label="预览窗口">
              <Icon w={32}>
                <rect x="2" y="3" width="28" height="20" rx="3" />
                <path d="M4 29H28" />
              </Icon>
            </ToolButton>
            <ToolButton aria-label="图层">
              <Icon w={32}>
                <path d="M16 2L30 10L16 17L2 10Z" />
                <path d="M4 15L2 16L16 23L30 16L28 15M4 21L2 22L16 29L30 22L28 21" />
              </Icon>
            </ToolButton>
            <ToolButton $apart aria-label="测量">
              <Icon w={32}>
                <path d="M1 10H31V22H1ZM7 22V15M13 22V17M19 22V17M25 22V15" />
              </Icon>
            </ToolButton>
          </ToolStack>
          <ToolStack $bottom>
            <ToolButton aria-label="组件"><FourSquares size={32} sw={2} /></ToolButton>
          </ToolStack>
          <ZoomControl>
            <ZoomLevel>7.8</ZoomLevel>
            <ZoomOut aria-label="缩小">
              <Icon w={24} h={4} box="0 0 24 4" sw={3}><path d="M0 2H24" /></Icon>
            </ZoomOut>
          </ZoomControl>
          <ScaleBar>20 km<ScaleRule /></ScaleBar>
          <Credit>
            <svg width="32" height="32" viewBox="0 0 32 32" aria-hidden="true">
              <path d="M0 4Q0 0 4 0H16L0 18Z" fill="#a9d97f" />
              <path d="M18 32H28Q32 32 32 28V20Z" fill="#7fd0ea" />
              <path d="M30 3L1 17L12 20Z" fill="#3c97f5" />
              <path d="M30 3L12 20L19 28L23 25Z" fill="#1565d8" />
            </svg>
            <CreditName>高德地图</CreditName>
            © 2025 Amap
          </Credit>
        </MapArea>
      </Page>

      <Overlay>
        <Dialog role="dialog" aria-modal="true" aria-labelledby="dialog-title">
          <DialogHead>
            <DialogTitle id="dialog-title">将数据添加到项目中</DialogTitle>
            <CloseButton aria-label="关闭">
              <Icon w={26} box="0 0 26 26"><path d="M1 1L25 25M25 1L1 25" strokeWidth="2.500" /></Icon>
            </CloseButton>
          </DialogHead>
          <Tabs>
            <Tab $active>
              <Icon w={20} h={26} box="0 0 20 26">
                <path d="M1 1H19V25H1ZM1 9H19M1 17H19M5 5H7M5 13H7M5 21H7" />
              </Icon>
              已有数据集
            </Tab>
            <Tab>
              <Icon w={24} box="0 0 24 24">
                <path d="M1 1H23V23H1ZM1 7H23M9.500 11.500L6.500 15L9.500 18.500M14.500 11.500L17.500 15L14.500 18.500" />
              </Icon>
              SQL查询
            </Tab>
          </Tabs>
          <Workspace>
            <Tree />
            <Datasets />
            <Splitter aria-label="调整宽度"><i /></Splitter>
          </Workspace>
          <DialogFoot>
            <CancelButton>取消</CancelButton>
            <ConfirmButton>添加到项目</ConfirmButton>
          </DialogFoot>
        </Dialog>
      </Overlay>
    </>
  );
}
